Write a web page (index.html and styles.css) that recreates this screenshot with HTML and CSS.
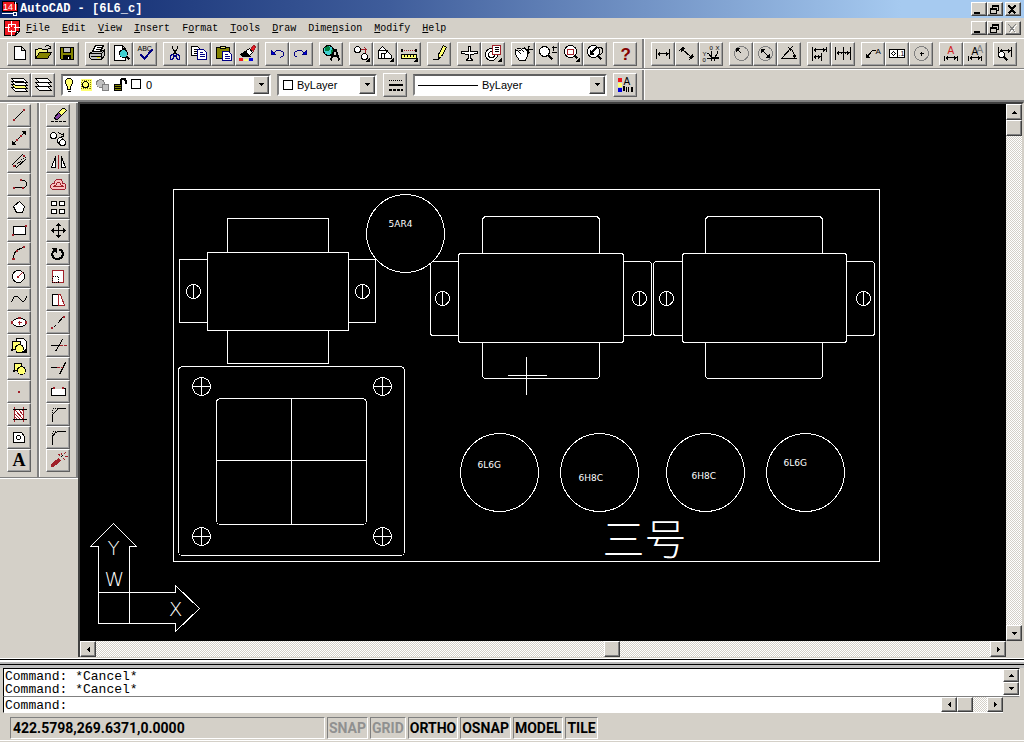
FILE: index.html
```html
<!DOCTYPE html>
<html lang="en">
<head>
<meta charset="utf-8">
<title>AutoCAD - [6L6_c]</title>
<link rel="stylesheet" href="styles.css">
</head>
<body>
<header class="titlebar">
  <svg class="logo" viewBox="0 0 17 16"><path class="fr" d="M0 0h12v2h3v8H0z"/><path class="sw" d="M0 12h11M13 1v8M11 11h3v3h-3z"/><text class="t9 fw" x="1" y="9">14</text></svg>
  <h1>AutoCAD - [6L6_c]</h1>
  <div class="winbtns">
    <button class="wb" aria-label="Minimize"><svg viewBox="-.5 -.5 12 10"><path class="k" d="M2 8h5v1H2z"/></svg></button>
    <button class="wb" aria-label="Restore"><svg viewBox="-.5 -.5 12 10"><path d="M4 3V1h6v5H8M4 2h6M2 4h6v5H2zM2 5h6"/></svg></button>
    <button class="wb close" aria-label="Close"><svg viewBox="-.5 -.5 12 10"><path class="s2" d="M2 1l7 8M9 1L2 9"/></svg></button>
  </div>
</header>
<nav class="menubar">
  <svg class="logo" viewBox="-.5 -.5 17 16"><path class="fr" d="M0 0h15v11l-4 4H0z"/><path class="sw" d="M4 4h7v7H4zM7 0v6M7 9v6M0 7h5M9 7h6"/><path class="w" d="M11 15l1-4h3z"/></svg>
  <button><u>F</u>ile</button><button><u>E</u>dit</button><button><u>V</u>iew</button><button><u>I</u>nsert</button><button>F<u>o</u>rmat</button><button><u>T</u>ools</button><button><u>D</u>raw</button><button>Dime<u>n</u>sion</button><button><u>M</u>odify</button><button><u>H</u>elp</button>
  <div class="winbtns">
    <button class="wb" aria-label="Minimize drawing"><svg viewBox="-.5 -.5 12 10"><path class="k" d="M2 8h5v1H2z"/></svg></button>
    <button class="wb" aria-label="Restore drawing"><svg viewBox="-.5 -.5 12 10"><path d="M4 3V1h6v5H8M4 2h6M2 4h6v5H2zM2 5h6"/></svg></button>
    <button class="wb close" aria-label="Close drawing" disabled><svg viewBox="-.5 -.5 12 10"><path class="sw" d="M3 2l7 8M10 2L3 10"/><path class="sg" d="M2 1l7 8M9 1L2 9"/></svg></button>
  </div>
</nav>

<div class="toolrow">
  <div class="bar left">
    <div class="group">
      <button class="tb" aria-label="New"><svg viewBox="-.5 -.5 20 20"><path class="w" d="M5 2h7l4 4v9H5zM12 2v4h4"/></svg></button>
      <button class="tb" aria-label="Open"><svg viewBox="-.5 -.5 20 20"><path class="fy" d="M2 14V5h2l1-1h3l1 1h5v4"/><path class="o" d="M2 14l4-6h12l-4 6z"/><path d="M11 3l2-2h2l2 2M17 1v3h-3"/></svg></button>
      <button class="tb" aria-label="Save"><svg viewBox="-.5 -.5 20 20"><path class="o" d="M3 3h13v12H4l-1-1z"/><path class="g" d="M6 3h7v5H6z"/><path class="k" d="M6 11h7v4H6z"/><path class="sw" d="M11 12v2"/></svg></button>
    </div>
    <div class="group">
      <button class="tb" aria-label="Print"><svg viewBox="-.5 -.5 20 20"><path class="w" d="M5 7l3-6h8l-3 6z"/><path d="M9 3h5M8 5h5"/><path class="g" d="M2 9l3-2h9l3-2v6l-3 4H4l-2-2z"/><path d="M2 9h12l3-3M14 9v5M3 12h11"/><path class="sy" d="M9 13h3"/></svg></button>
      <button class="tb" aria-label="Print preview"><svg viewBox="-.5 -.5 20 20"><path class="w" d="M3 1h8l3 3v12H3zM11 1v3h3"/><circle class="cy" cx="12" cy="9" r="4"/><path class="s2" d="M15 12l3 3"/></svg></button>
      <button class="tb" aria-label="Spelling"><svg viewBox="-.5 -.5 20 20"><text class="t7" x="2" y="6">ABC</text><path class="sb s2" d="M5 10l4 4 8-9"/></svg></button>
    </div>
    <div class="group">
      <button class="tb" aria-label="Cut"><svg viewBox="-.5 -.5 20 20"><path d="M7 1v3l5 7M12 1v3l-5 7"/><path class="sb" d="M7 10l-2 1v4h2l2-4zM12 10l2 1v4h-2l-2-4z"/></svg></button>
      <button class="tb" aria-label="Copy"><svg viewBox="-.5 -.5 20 20"><path class="w" d="M2 2h6l2 2v7H2z"/><path d="M4 5h3M4 7h4M4 9h4"/><path class="w sb" d="M8 5h6l3 3v7H8z"/><path class="sb" d="M10 8h3M10 10h5M10 12h5"/></svg></button>
      <button class="tb" aria-label="Paste"><svg viewBox="-.5 -.5 20 20"><path class="o" d="M3 3h13v11H3z"/><path class="fy" d="M7 2h5v2H7z"/><path class="w sb" d="M9 7h6l3 3v6H9z"/><path class="sb" d="M11 10h3M11 12h5M11 14h5"/></svg></button>
      <button class="tb" aria-label="Match properties"><svg viewBox="-.5 -.5 20 20"><path class="fr sr" d="M13 5l3-4 2 1-2 5z"/><path class="w" d="M9 6l3-2 3 4-4 4-4-2z"/><path class="k" d="M3 10l5-3 5 5H5z"/><path class="fr nr" d="M1 13h4v3H1z"/><path class="fyy nr" d="M6 14h4v2H6z"/><path class="fb nr" d="M11 13h4v3h-4z"/></svg></button>
    </div>
    <div class="group">
      <button class="tb" aria-label="Undo"><svg viewBox="-.5 -.5 20 20"><path class="sb" d="M6 9l3-3h4l3 2v3l-3 2"/><path class="sb fb" d="M4 6v4h4z"/></svg></button>
      <button class="tb" aria-label="Redo"><svg viewBox="-.5 -.5 20 20"><path class="sb" d="M13 9l-3-3H6L3 8v3l3 2"/><path class="sb fb" d="M15 6v4h-4z"/></svg></button>
    </div>
    <div class="group">
      <button class="tb" aria-label="Launch browser"><svg viewBox="-.5 -.5 20 20"><circle class="cy" cx="7" cy="6" r="5"/><path class="gn" d="M3 3l4-2 2 3-3 3-3-1zM9 6l3-2v4l-3 2z"/><path class="s2" d="M13 5l-4 11M14 5l4 11M11 11h6"/></svg></button>
    </div>
    <div class="group">
      <button class="tb" aria-label="Object snap"><svg viewBox="-.5 -.5 20 20"><circle class="w" cx="6" cy="5" r="3"/><path class="sr" d="M9 5h5M13 3l2 2-2 2M14 6v5"/><circle class="w" cx="13" cy="12" r="3"/><path class="k" d="M18 14v3h-3z"/></svg></button>
      <button class="tb" aria-label="UCS"><svg viewBox="-.5 -.5 20 20"><path class="w" d="M3 6l4-4 4 4v8H3zM2 6h10M6 9h3v5H6z"/><path class="w" d="M9 10l3-3 4 4v3H9z"/><path class="k" d="M18 14v3h-3z"/></svg></button>
      <button class="tb" aria-label="Distance"><svg viewBox="-.5 -.5 20 20"><path class="sr dot" d="M4 6h12"/><path class="k" d="M2 5h1v2H2zM16 5h1v2h-1z"/><path class="fyy" d="M2 10h15v4H2z"/><path d="M5 10v2M8 10v2M11 10v2M14 10v2"/><path class="k" d="M18 14v3h-3z"/></svg></button>
    </div>
    <div class="group">
      <button class="tb" aria-label="Redraw"><svg viewBox="-.5 -.5 20 20"><path class="fyy" d="M9 10l5-9 3 2-5 9-3 2z"/><path d="M3 15h6l2-2"/></svg></button>
    </div>
    <div class="group">
      <button class="tb" aria-label="Aerial view"><svg viewBox="-.5 -.5 20 20"><path class="w" d="M9 2h2v5h7v2l-7 1v4l2 1v1H7v-1l2-1v-4L2 9V7h7z"/></svg></button>
      <button class="tb" aria-label="Named views"><svg viewBox="-.5 -.5 20 20"><circle class="w" cx="8" cy="10" r="6"/><circle cx="8" cy="10" r="3"/><path class="w sr" d="M9 1h8v9H9z"/><path d="M11 3h4M11 5h4M11 7h4"/><path class="k" d="M18 14v3h-3z"/></svg></button>
    </div>
    <div class="group">
      <button class="tb" aria-label="Pan"><svg viewBox="-.5 -.5 20 20"><path class="w" d="M6 16l-4-6V5l3 2 6-4 1 2 2 1v5l-2 5zM5 7l3 3M3 4h4l4 4"/><path d="M15 1v8M11 5h8M14 2h2M14 8h2"/></svg></button>
      <button class="tb" aria-label="Zoom realtime"><svg viewBox="-.5 -.5 20 20"><circle class="w" cx="7" cy="7" r="5"/><path class="s2" d="M11 11l4 4"/><path d="M16 1v5M14 3h5M14 8h5"/></svg></button>
      <button class="tb" aria-label="Zoom window"><svg viewBox="-.5 -.5 20 20"><circle class="w" cx="9" cy="7" r="6"/><path class="sr" d="M6 5h6v5H6z"/><path class="s2" d="M13 11l3 3"/><path class="k" d="M18 14v3h-3z"/></svg></button>
      <button class="tb" aria-label="Zoom previous"><svg viewBox="-.5 -.5 20 20"><circle class="w" cx="8" cy="7" r="6"/><path d="M11 3c8-2 8 6 3 7"/><path class="k" d="M5 10V6l1 1 4-4 1 1-4 4 1 2z"/><path class="s2" d="M12 11l4 4"/></svg></button>
    </div>
    <div class="group">
      <button class="tb" aria-label="Help"><svg viewBox="-.5 -.5 20 20"><text class="help" x="5" y="15">?</text></svg></button>
    </div>
  </div>
  <div class="bar right">
    <div class="group">
      <button class="tb" aria-label="Linear dimension"><svg viewBox="-.5 -.5 20 20"><path d="M3 4v10M16 4v10M4 9h11M5 8v2M6 7v4M14 8v2M13 7v4"/></svg></button>
      <button class="tb" aria-label="Aligned dimension"><svg viewBox="-.5 -.5 20 20"><path d="M2 6l5-4M12 15l5-4M5 5l9 8"/><path class="k" d="M4 4h3L4 7zM15 13h-3l3-3z"/></svg></button>
      <button class="tb" aria-label="Ordinate dimension"><svg viewBox="-.5 -.5 20 20"><text class="t6" x="8" y="5">0</text><text class="t6" x="14" y="5">X</text><text class="t6" x="1" y="11">Y</text><text class="t6" x="1" y="17">0</text><path d="M10 6v10M5 9h2l3 4h7M5 14h12M16 6v3l-3 4v3"/></svg></button>
    </div>
    <div class="group">
      <button class="tb" aria-label="Radius dimension"><svg viewBox="-.5 -.5 20 20"><circle class="sg" cx="10" cy="9" r="7"/><path d="M10 9L6 5"/><path class="k" d="M5 4h3L5 7z"/></svg></button>
      <button class="tb" aria-label="Diameter dimension"><svg viewBox="-.5 -.5 20 20"><circle class="sg" cx="10" cy="9" r="7"/><path d="M6 5l8 8"/><path class="k" d="M6 5h3L6 8zM14 13h-3l3-3z"/></svg></button>
      <button class="tb" aria-label="Angular dimension"><svg viewBox="-.5 -.5 20 20"><path d="M13 2L2 14h15M11 4c3 3 4 6 4 9"/><path class="k" d="M10 4l2 1-1 1zM14 11h2l-1 2z"/></svg></button>
    </div>
    <div class="group">
      <button class="tb" aria-label="Baseline dimension"><svg viewBox="-.5 -.5 20 20"><path d="M3 2v14M17 2v5M12 8v8M4 5h12M4 12h7M5 4v2M6 3v4M15 4v2M14 3v4M5 11v2M6 10v4M10 11v2M9 10v4"/></svg></button>
      <button class="tb" aria-label="Continue dimension"><svg viewBox="-.5 -.5 20 20"><path d="M2 2v13M10 2v13M17 2v13M3 8h13M4 7v2M5 6v4M8 7v2M12 7v2M15 7v2M14 6v4"/></svg></button>
    </div>
    <div class="group">
      <button class="tb" aria-label="Leader"><svg viewBox="-.5 -.5 20 20"><path d="M3 13l6-7h3"/><path class="k" d="M3 13v-3l3 3z"/><text class="t8" x="12" y="9">A</text></svg></button>
      <button class="tb" aria-label="Tolerance"><svg viewBox="-.5 -.5 20 20"><path class="w" d="M2 5h15v8H2zM10 5v8M6 7l2 2-2 2-2-2z"/><text class="t7" x="11" y="11">.1</text></svg></button>
      <button class="tb" aria-label="Center mark"><svg viewBox="-.5 -.5 20 20"><circle class="sg" cx="10" cy="9" r="7"/><path d="M10 7v4M8 9h4"/></svg></button>
    </div>
    <div class="group">
      <button class="tb" aria-label="Dimension text edit"><svg viewBox="-.5 -.5 20 20"><text class="t10 tr" x="6" y="9">A</text><path d="M3 11v5M16 11v5M4 13h11M5 12v2M14 12v2M6 11v4M13 11v4"/></svg></button>
      <button class="tb" aria-label="Dimension update"><svg viewBox="-.5 -.5 20 20"><text class="t10 tg" x="11" y="8">A</text><text class="t10" x="6" y="10">A</text><path d="M3 11v5M16 11v5M4 13h11M5 12v2M14 12v2M6 11v4M13 11v4"/></svg></button>
    </div>
    <div class="group">
      <button class="tb" aria-label="Dimension style"><svg viewBox="-.5 -.5 20 20"><path d="M3 2v8M16 2v10M4 6h11M5 5v2M6 4v4M14 5v2M13 4v4"/><circle class="w" cx="6" cy="10" r="3"/><path class="s2" d="M8 12l4 4"/></svg></button>
    </div>
  </div>
</div>

<div class="toolrow second">
  <div class="bar left">
    <div class="group">
      <button class="tb" aria-label="Make object's layer current"><svg viewBox="-.5 -.5 20 20"><path class="w" d="M2 12h12l4 4H6z"/><path class="fyy" d="M2 9h12l4 4H6z"/><path class="w" d="M2 6h12l4 4H6zM2 3h12l4 4H6z"/></svg></button>
      <button class="tb" aria-label="Layers"><svg viewBox="-.5 -.5 20 20"><path class="w" d="M2 11h12l4 4H6zM2 7h12l4 4H6zM2 3h12l4 4H6z"/></svg></button>
    </div>
    <div class="combo layer">
      <svg viewBox="-.5 -.5 80 18"><path class="fyy" d="M4 2h3l2 2v3l-2 3v3H4v-3L2 7V4z"/><path d="M4 13h3M4 15h3"/><path class="fyy nr" d="M17 2h11v12H17z"/><circle class="fyy" cx="22" cy="8" r="3"/><path class="so dot" d="M18 4h9v8h-9z"/><circle class="g sg" cx="37" cy="7" r="4"/><path class="g sg" d="M39 8h6v6h-6z"/><path class="o" d="M51 8h7v6h-7zM51 10h7M51 12h7"/><path class="s2" d="M57 8V4l2-2h2l1 2v3"/><path class="w" d="M68 3h9v9h-9z"/></svg>
      <select aria-label="Layer"><option>0</option></select>
      <span class="drop"><svg viewBox="-.5 -.5 12 14"><path class="k" d="M4 5h4L6 7z"/></svg></span>
    </div>
    <div class="combo color">
      <svg viewBox="-.5 -.5 15 18"><path class="w" d="M4 4h9v9H4z"/></svg>
      <select aria-label="Color"><option>ByLayer</option></select>
      <span class="drop"><svg viewBox="-.5 -.5 12 14"><path class="k" d="M4 5h4L6 7z"/></svg></span>
    </div>
    <div class="group">
      <button class="tb" aria-label="Linetype"><svg viewBox="-.5 -.5 20 20"><path class="dot" d="M3 5h14"/><path class="s2" d="M3 9h14"/><path class="s2 dash" d="M3 14h14"/></svg></button>
    </div>
    <div class="combo line">
      <svg viewBox="-.5 -.5 64 18"><path d="M2 9h60"/></svg>
      <select aria-label="Linetype"><option>ByLayer</option></select>
      <span class="drop"><svg viewBox="-.5 -.5 12 14"><path class="k" d="M4 5h4L6 7z"/></svg></span>
    </div>
    <div class="group">
      <button class="tb" aria-label="Properties"><svg viewBox="-.5 -.5 20 20"><path class="fr nr" d="M2 2h4v4H2z"/><path class="fyy nr" d="M2 7h4v4H2z"/><path class="fb nr" d="M2 12h4v4H2z"/><text class="t10" x="8" y="9">A</text><path class="k" d="M8 11h1v4H8z"/><path d="M11 11v5M13 11v5"/><path class="s2" d="M16 11v5"/></svg></button>
    </div>
  </div>
</div>

<main>
  <aside class="palette">
    <div class="col">
      <button class="tb" aria-label="Line"><svg viewBox="-.5 -.5 20 19"><path d="M5 13L14 4"/><path class="dr" d="M4 13h1v1H4zM14 3h1v1h-1z"/></svg></button>
      <button class="tb" aria-label="Construction line"><svg viewBox="-.5 -.5 20 19"><path d="M3 15L16 2"/><path class="k" d="M3 15v-3l3 3zM16 2v3l-3-3z"/><path class="dr" d="M7 10h1v1H7zM11 6h1v1h-1z"/></svg></button>
      <button class="tb" aria-label="Multiline"><svg viewBox="-.5 -.5 20 19"><path d="M3 12L13 2M7 15L17 6M3 12l4 3M13 2l4 4"/><path class="dot" d="M6 13l9-8"/><path class="dr" d="M4 13h1v1H4zM14 3h1v1h-1z"/></svg></button>
      <button class="tb" aria-label="Polyline"><svg viewBox="-.5 -.5 20 19"><path d="M5 12h10l2-2V7l-2-2h-3"/><path class="dr" d="M4 12h1v1H4zM13 12h1v1h-1zM11 4h1v1h-1z"/></svg></button>
      <button class="tb" aria-label="Polygon"><svg viewBox="-.5 -.5 20 19"><path class="w" d="M10 3l5 5-2 6H7L4 8z"/></svg></button>
      <button class="tb" aria-label="Rectangle"><svg viewBox="-.5 -.5 20 19"><path class="w" d="M4 5h12v8H4z"/><path class="dr" d="M3 13h1v1H3zM16 4h1v1h-1z"/></svg></button>
      <button class="tb" aria-label="Arc"><svg viewBox="-.5 -.5 20 19"><path d="M4 14c0-6 4-10 11-11"/><path class="dr" d="M3 14h2v1H3zM7 6h1v1H7zM14 2h1v1h-1z"/></svg></button>
      <button class="tb" aria-label="Circle"><svg viewBox="-.5 -.5 20 19"><circle class="w" cx="9" cy="9" r="6"/><path class="sr" d="M9 9l4-4"/><path class="dr" d="M8 9h1v1H8z"/></svg></button>
      <button class="tb" aria-label="Spline"><svg viewBox="-.5 -.5 20 19"><path d="M2 12c2-7 5-8 8-4s5 4 7-2"/></svg></button>
      <button class="tb" aria-label="Ellipse"><svg viewBox="-.5 -.5 20 19"><ellipse class="w" cx="10" cy="9" rx="7" ry="4"/><path class="dr" d="M2 8h1v2H2zM16 8h1v2h-1zM9 4h2v1H9z"/><path class="sr" d="M8 9h4M10 7v4"/></svg></button>
      <button class="tb" aria-label="Insert block"><svg viewBox="-.5 -.5 20 19"><path class="w" d="M7 2h7l3 3v11H7z"/><path class="fyy" d="M3 5h8v8H3z"/><circle class="fyy" cx="10" cy="12" r="4"/><path class="k" d="M17 12v4h-4z"/><path class="k" d="M2 13h1v1H2z"/></svg></button>
      <button class="tb" aria-label="Make block"><svg viewBox="-.5 -.5 20 19"><path class="fyy" d="M5 4h7v7H5z"/><circle class="fyy" cx="12" cy="11" r="4"/><path class="k" d="M4 11h1v1H4z"/></svg></button>
      <button class="tb" aria-label="Point"><svg viewBox="-.5 -.5 20 19"><path class="dr" d="M9 9h1v1H9z"/></svg></button>
      <button class="tb" aria-label="Hatch"><svg viewBox="-.5 -.5 20 19"><path class="w" d="M5 4h9v10H5z"/><path class="sr" d="M5 8l6 6M5 4l9 10M9 4l5 6M12 4l2 2M5 11l3 3"/><path class="sr" d="M5 1v15M14 1v15"/><path d="M3 4h14M3 14h14"/></svg></button>
      <button class="tb" aria-label="Region"><svg viewBox="-.5 -.5 20 19"><path class="w" d="M4 4h8l3 4v6H4z"/><circle cx="9" cy="9" r="2"/></svg></button>
      <button class="tb" aria-label="Text"><svg viewBox="-.5 -.5 20 19"><text class="bigA" x="3" y="14">A</text></svg></button>
    </div>
    <div class="col">
      <button class="tb" aria-label="Erase"><svg viewBox="-.5 -.5 20 19"><path class="fyy" d="M10 6l4-4h2l2 2-5 5z"/><path class="pu" d="M6 11l4-5 3 3-4 4H7z"/><path class="dash" d="M2 15h16"/></svg></button>
      <button class="tb" aria-label="Copy object"><svg viewBox="-.5 -.5 20 19"><circle class="w" cx="5" cy="6" r="3"/><circle class="w" cx="12" cy="11" r="3"/><circle class="w" cx="14" cy="13" r="3"/><path d="M10 3l5 3M15 3v4h-3"/></svg></button>
      <button class="tb" aria-label="Mirror"><svg viewBox="-.5 -.5 20 19"><path class="w" d="M7 4v11H3zM13 4v11h4z"/><path class="sr" d="M10 2v14"/></svg></button>
      <button class="tb" aria-label="Offset"><svg viewBox="-.5 -.5 20 19"><path class="pk" d="M6 8c0-6 8-6 8 0 5 0 4 6 1 6H5C1 14 1 8 6 8z"/><path class="sr" d="M8 9c0-3 4-3 4 0l3 2H5z"/></svg></button>
      <button class="tb" aria-label="Array"><svg viewBox="-.5 -.5 20 19"><path class="w" d="M3 3h5v4H3zM11 3h5v4h-5zM3 11h5v4H3zM11 11h5v4h-5z"/></svg></button>
      <button class="tb" aria-label="Move"><svg viewBox="-.5 -.5 20 19"><path d="M10 2v14M3 9h14"/><path class="k" d="M8 4h4l-2-2zM8 14h4l-2 2zM5 7v4L3 9zM15 7v4l2-2z"/></svg></button>
      <button class="tb" aria-label="Rotate"><svg viewBox="-.5 -.5 20 19"><path class="s2" d="M7 5c-7 4-1 12 4 9 5-2 4-8 0-9"/><path class="k" d="M4 4h4v4z"/></svg></button>
      <button class="tb" aria-label="Scale"><svg viewBox="-.5 -.5 20 19"><path class="w sr" d="M4 3h11v12H4z"/><path class="dot" d="M4 9h6v6H4z"/></svg></button>
      <button class="tb" aria-label="Stretch"><svg viewBox="-.5 -.5 20 19"><path class="w" d="M4 4h6v11H4z"/><path class="w sr" d="M10 4h2l4 11h-6z"/></svg></button>
      <button class="tb" aria-label="Lengthen"><svg viewBox="-.5 -.5 20 19"><path d="M9 10l6-7"/><path class="dot" d="M4 15l5-5"/><path class="dr" d="M3 14h1v1H3zM15 3h1v1h-1z"/></svg></button>
      <button class="tb" aria-label="Trim"><svg viewBox="-.5 -.5 20 19"><path d="M7 15l7-12M2 9h8"/><path class="sr dash" d="M11 9h7"/></svg></button>
      <button class="tb" aria-label="Extend"><svg viewBox="-.5 -.5 20 19"><path d="M11 15l6-12M2 8h6"/><path class="sr dash" d="M8 8h6"/></svg></button>
      <button class="tb" aria-label="Break"><svg viewBox="-.5 -.5 20 19"><path class="w" d="M6 6H3v7h14V6h-3"/><path class="dr" d="M5 5h1v1H5zM14 5h1v1h-1z"/></svg></button>
      <button class="tb" aria-label="Chamfer"><svg viewBox="-.5 -.5 20 19"><path d="M4 16v-7l6-6h7"/><path class="dot" d="M4 9V3h6"/></svg></button>
      <button class="tb" aria-label="Fillet"><svg viewBox="-.5 -.5 20 19"><path d="M4 16v-5c0-5 3-8 8-8h5"/><path class="dot" d="M4 9V3h6"/></svg></button>
      <button class="tb" aria-label="Explode"><svg viewBox="-.5 -.5 20 19"><path class="dr" d="M3 13l7-6 2 2-7 6H3z"/><path d="M12 6l2-2"/><path class="sr" d="M13 1v2M17 1l-2 2M16 5h3M15 7l2 2M10 3l2 1"/></svg></button>
    </div>
  </aside>

  <section class="viewport">
    <div class="canvas">
      <svg width="926" height="538" viewBox="79.5 103.5 926 538" role="img" aria-label="Chassis layout drawing">
        <path d="M173 189h706v372H173z"/>
        <path d="M207 252h141v78H207zM227 252v-34h101v34M227 330v33h101v-33M207 259h-28v63h28M348 259h27v63h-27"/>
        <circle cx="193" cy="291" r="7"/><circle cx="362" cy="291" r="7"/><path d="M193 284v14M362 284v14"/>
        <circle cx="405" cy="233" r="39"/>
        <rect x="178" y="366" width="226" height="189" rx="4"/><rect x="216" y="398" width="150" height="126" rx="4"/>
        <path d="M291 398v126M216 460h150"/>
        <circle cx="201" cy="386" r="9"/><circle cx="382" cy="386" r="9"/><circle cx="201" cy="536" r="9"/><circle cx="382" cy="536" r="9"/>
        <path d="M192 386h18M201 377v18M373 386h18M382 377v18M192 536h18M201 527v18M373 536h18M382 527v18"/>
        <rect x="458" y="253" width="165" height="89" rx="3"/><rect x="682" y="253" width="164" height="89" rx="3"/>
        <path d="M482 253v-33q0-4 4-4h109q4 0 4 4v33M482 342v32q0 4 4 4h109q4 0 4-4v-32M458 261h-25q-3 0-3 3v68q0 3 3 3h25M623 261h25q3 0 3 3v68q0 3-3 3h-25"/>
        <path d="M705 253v-33q0-4 4-4h109q4 0 4 4v33M705 342v32q0 4 4 4h109q4 0 4-4v-32M682 261h-26q-3 0-3 3v68q0 3 3 3h26M846 261h25q3 0 3 3v68q0 3-3 3h-25"/>
        <circle cx="442" cy="298" r="7"/><circle cx="639" cy="298" r="7"/><circle cx="666" cy="298" r="7"/><circle cx="863" cy="298" r="7"/>
        <path d="M442 291v14M639 291v14M666 291v14M863 291v14"/>
        <circle cx="499" cy="472" r="39"/><circle cx="599" cy="472" r="39"/><circle cx="705" cy="472" r="39"/><circle cx="805" cy="472" r="39"/>
        <path d="M526 356v38M507 375h39"/>
        <path d="M98 623V546h-8l23-23 23 23h-7v77zM98 592h77v-7l24 23-24 23v-8h-46"/>
        <text class="tag" x="388" y="226">5AR4</text><text class="tag" x="477" y="467">6L6G</text><text class="tag" x="578" y="480">6H8C</text><text class="tag" x="691" y="478">6H8C</text><text class="tag" x="783" y="465">6L6G</text>
        <text class="cjk" x="602" y="554">三号</text>
        <text class="axis" x="113" y="554">Y</text><text class="axis" x="114" y="585">W</text><text class="axis" x="175" y="615">X</text>
      </svg>
    </div>
    <div class="vscroll"><button class="sb-btn" aria-label="Scroll up"><svg viewBox="-.5 -.5 12 12"><path class="k" d="M4 7h4L6 5z"/></svg></button><div class="thumb"></div><div class="space"></div><button class="sb-btn" aria-label="Scroll down"><svg viewBox="-.5 -.5 12 12"><path class="k" d="M4 5h4L6 7z"/></svg></button></div>
    <div class="hscroll"><button class="sb-btn" aria-label="Scroll left"><svg viewBox="-.5 -.5 12 12"><path class="k" d="M7 4v4L5 6z"/></svg></button><div class="space wide"></div><div class="thumb"></div><div class="space rest"></div><button class="sb-btn" aria-label="Scroll right"><svg viewBox="-.5 -.5 12 12"><path class="k" d="M5 4v4l2-2z"/></svg></button></div>
  </section>
</main>

<div class="splitter"></div>
<section class="command">
  <div class="history">
    <div class="lines"><p>Command: *Cancel*</p><p>Command: *Cancel*</p></div>
    <div class="vmini"><button class="sb-btn" aria-label="History up"><svg viewBox="-.5 -.5 12 9"><path class="k" d="M4 5h4L6 3z"/></svg></button><button class="sb-btn" aria-label="History down"><svg viewBox="-.5 -.5 12 9"><path class="k" d="M4 3h4L6 5z"/></svg></button></div>
  </div>
  <div class="prompt">
    <label for="cmd">Command:</label><input id="cmd" type="text">
    <div class="hmini"><button class="sb-btn" aria-label="Command left"><svg viewBox="-.5 -.5 12 11"><path class="k" d="M7 3v4L5 5z"/></svg></button><div class="thumb"></div><div class="space"></div><button class="sb-btn" aria-label="Command right"><svg viewBox="-.5 -.5 12 11"><path class="k" d="M5 3v4l2-2z"/></svg></button></div>
  </div>
</section>
<footer class="status">
  <output class="coords">422.5798,269.6371,0.0000</output>
  <button class="off">SNAP</button><button class="off">GRID</button><button>ORTHO</button><button>OSNAP</button><button>MODEL</button><button>TILE</button>
</footer>
</body>
</html>
```

FILE: styles.css
```css
* { box-sizing: border-box; }
html { height: 100%; }
body { margin: 0; min-height: 100%; height: 100vh; display: flex; flex-direction: column; background: #d4d0c8; color: #000; font: 11px "Liberation Sans", sans-serif; overflow: hidden; }
button { font: inherit; color: inherit; padding: 0; margin: 0; border: 0; background: none; }
h1, p { margin: 0; }
svg { display: block; fill: none; stroke: #000; shape-rendering: crispEdges; }
svg text { stroke: none; fill: #000; font-family: "Liberation Sans", sans-serif; }

.w { fill: #fff; }
.k { fill: #000; }
.g { fill: #c0c0c0; }
.o { fill: #848400; }
.fy { fill: #f0f080; }
.fyy { fill: #ffff70; }
.cy { fill: #40d0d0; }
.gn { fill: #008040; stroke: none; }
.pk { fill: #f8c0c0; stroke: #a02030; }
.pu { fill: #8040a0; }
.fr { fill: #f01820; }
.fb { fill: #0000e0; }
.dr { fill: #a02028; stroke: #a02028; }
.sr { stroke: #a02028; }
.so { stroke: #848400; }
.sb { stroke: #000084; }
.sy { stroke: #e0e000; }
.sg { stroke: #808080; }
.sw { stroke: #fff; }
.nr { stroke: none; }
.s2 { stroke-width: 2; }
.dot { stroke-dasharray: 1 1; }
.dash { stroke-dasharray: 3 1; }
svg .fw { fill: #fff; }
.t6 { font-size: 6px; }
.t7 { font-size: 7px; }
.t8 { font-size: 8px; }
.t9 { font-size: 9px; }
.t10 { font-size: 10px; }
svg .tr { fill: #d02020; }
svg .tg { fill: #808080; }
svg .help { fill: #840000; font-size: 17px; font-weight: bold; }
svg .bigA { font: bold 18px "Liberation Serif", serif; }

.titlebar { flex: none; height: 18px; display: flex; align-items: center; padding: 0 3px 0 2px; gap: 1px; background: linear-gradient(90deg, #0a246a, #3f5d9b 38%, #a6caf0 88%); color: #fff; }
.logo { width: 17px; height: 16px; flex: none; }
.titlebar h1 { font: bold 12px/16px "Liberation Mono", monospace; }
.winbtns { display: flex; margin-left: auto; }
.wb { width: 16px; height: 14px; border: 1px solid; border-color: #fff #404040 #404040 #fff; background: #d4d0c8; box-shadow: inset -1px -1px #808080; }
.wb svg { width: 12px; height: 10px; }
.wb.close { margin-left: 2px; }

.menubar { flex: none; height: 20px; display: flex; align-items: center; padding: 0 3px 0 4px; font: 10px/14px "Liberation Mono", monospace; }
.menubar > button { margin-right: 12px; padding-top: 2px; }
.menubar > .logo { margin-right: 5px; }

.toolrow { flex: none; display: flex; border-top: 1px solid #fff; border-bottom: 1px solid #808080; }
.bar { display: flex; gap: 6px; padding: 3px 5px 2px 7px; }
.bar.left { border-right: 2px solid #808080; box-shadow: 1px 0 #fff; }
.second .bar { padding-bottom: 3px; }
.group { display: flex; }
.tb { width: 24px; height: 24px; border: 1px solid; border-color: #fff #606060 #606060 #fff; box-shadow: inset -1px -1px #a0a0a0; padding: 1px; }
.tb svg { width: 20px; height: 20px; }

.combo { display: flex; height: 22px; margin-top: 1px; border: 2px solid; border-color: #606060 #fff #fff #808080; background: #fff; }
.combo > svg { height: 18px; flex: none; }
.combo select { flex: 1; min-width: 0; appearance: none; border: 0; background: none; padding: 0 3px; font: 11px "Liberation Sans", sans-serif; color: #000; }
.layer { width: 210px; }
.layer > svg { width: 80px; }
.color { width: 100px; }
.color > svg { width: 15px; }
.line { width: 194px; }
.line > svg { width: 64px; }
.drop { width: 16px; border: 1px solid; border-color: #fff #404040 #404040 #fff; background: #d4d0c8; box-shadow: inset -1px -1px #808080; padding: 1px; }
.drop svg { width: 12px; height: 14px; }

main { flex: 1; min-height: 0; display: flex; border-top: 1px solid #808080; }
.palette { flex: none; display: flex; align-self: flex-start; border-top: 1px solid #fff; border-bottom: 1px solid #808080; box-shadow: 0 1px #fff; }
.col { display: flex; flex-direction: column; padding: 1px 6px 5px 7px; border-right: 2px solid #808080; }
.col + .col { border-left: 1px solid #fff; padding-left: 6px; }
.col .tb { height: 23px; }
.col .tb svg { height: 19px; }
.viewport { flex: 1; min-width: 0; display: grid; grid-template-columns: 1fr 16px; grid-template-rows: 1fr 16px; border: solid #404040; border-width: 2px 2px 0; border-right-color: #d4d0c8; }
.canvas { background: #000; overflow: hidden; min-width: 0; min-height: 0; }
.canvas svg { stroke: #fff; }
.canvas .tag { fill: #fff; font: 9px "DejaVu Sans", sans-serif; }
.canvas .cjk { fill: #fff; font: 300 42px "Noto Sans CJK SC", sans-serif; }
.canvas .axis { fill: #fff; font: 200 20px "DejaVu Sans", sans-serif; text-anchor: middle; }

.vscroll, .hscroll, .hmini { display: flex; background: repeating-conic-gradient(#fff 0 25%, #d4d0c8 0 50%) 0 0 / 2px 2px; }
.vscroll { flex-direction: column; }
.sb-btn, .thumb { width: 16px; height: 16px; flex: none; border: 1px solid; border-color: #fff #404040 #404040 #fff; background: #d4d0c8; box-shadow: inset -1px -1px #808080; padding: 1px; }
.sb-btn svg { width: 12px; height: 12px; }
.space { flex: 1; }
.wide { flex: 508; }
.rest { flex: 370; }

.splitter { flex: none; height: 10px; margin-top: 1px; background: linear-gradient(#fff 1px, #000 1px 2px, #fff 2px 4px, #b8b8b8 4px 6px, #000 6px 7px, #c0c0c0 7px); }
.command { flex: none; margin: 0 4px 0 3px; font: 13px/13px "Liberation Mono", monospace; }
.history { display: flex; background: #fff; border: 1px solid #000; border-right-color: #fff; border-bottom-color: #808080; }
.lines { flex: 1; padding-left: 1px; padding-top: 1px; }
.vmini .sb-btn { display: block; height: 13px; }
.vmini svg { height: 9px; }
.prompt { display: flex; align-items: center; height: 16px; margin-right: 17px; background: #fff; border-left: 1px solid #000; border-bottom: 1px solid #fff; padding-left: 1px; }
.prompt label { padding-top: 2px; }
.prompt input { flex: 1; min-width: 0; height: 14px; border: 0; padding: 0 8px; outline: 0; font: inherit; background: none; }
.hmini { width: 62px; }
.hmini .sb-btn, .hmini .thumb { height: 15px; }
.hmini svg { height: 11px; }

.status { flex: none; display: flex; gap: 2px; margin-top: 4px; padding: 0 0 1px 10px; border-bottom: 1px solid #fff; font: bold 14px/20px Roboto, sans-serif; margin-bottom: 1px; }
.coords, .status button { border: 1px solid; border-color: #808080 #fff #fff #808080; padding: 0 1px; line-height: 20px; }
.coords { width: 315px; padding: 0 2px; }
.off { color: #909090; }
```
